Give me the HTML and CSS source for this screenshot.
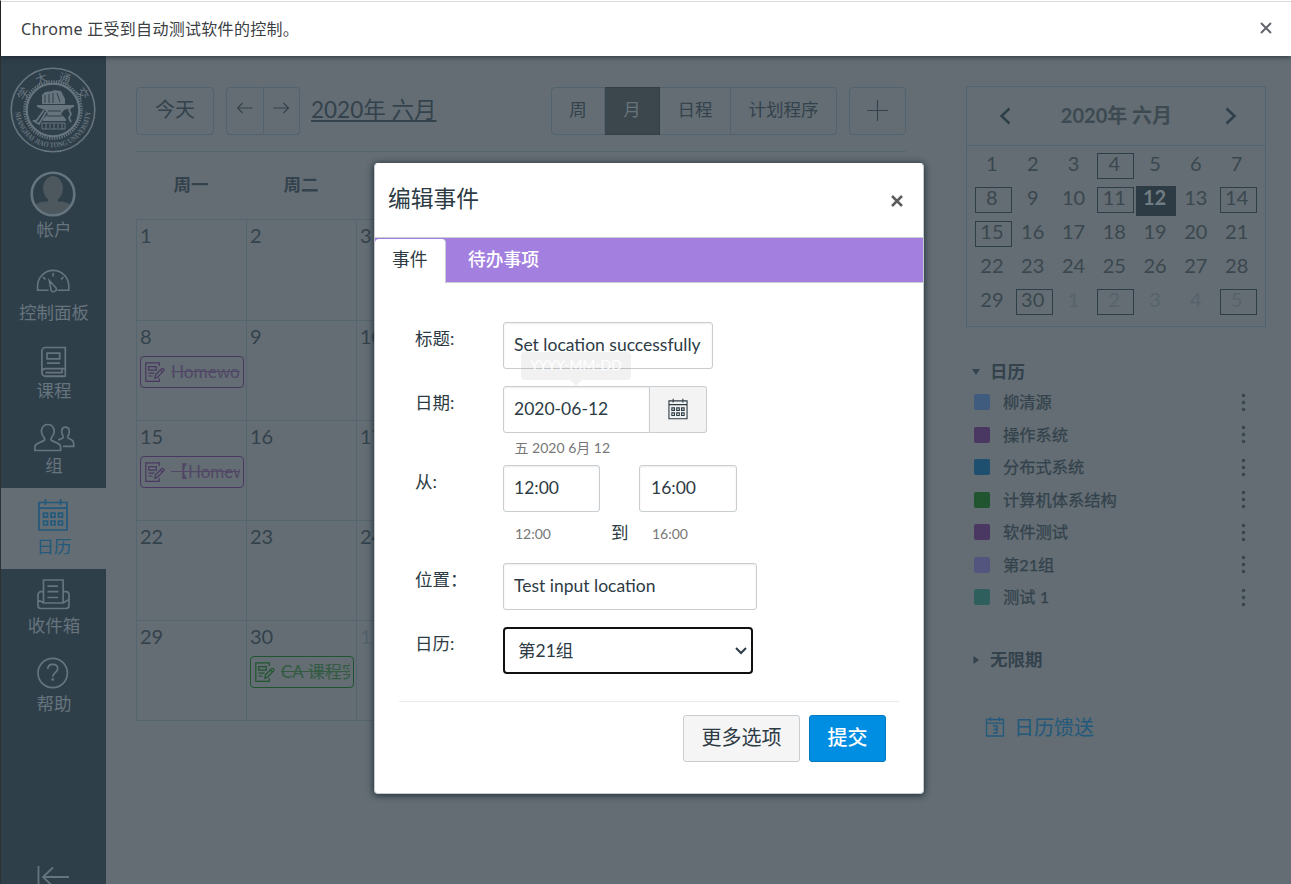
FILE: index.html
```html
<!DOCTYPE html>
<html lang="zh-CN">
<head>
<meta charset="utf-8">
<title>日历</title>
<link rel="stylesheet" href="styles.css">
</head>
<body>
<svg class="defs" width="0" height="0">
  <symbol id="assignment" viewBox="0 0 20 20">
    <path d="M14.3 4V.8H.8v18.5h13.5v-3M3.7 4.6h7.6v3.6H3.7zM3.5 11.1h6M3.5 14h4M9.8 16.2l.8-3.4 6-6.2c1.1-1 3.2.9 2.2 2.1l-6 6.3zM15.4 7.9l2.2 2.1" fill="none" stroke="currentColor" stroke-width="1.2"/>
  </symbol>
  <symbol id="calendar" viewBox="0 0 30 34">
    <path d="M1 4.5h28V32H1zM1 10.2h28M7.5 1v6M22.5 1v6" fill="none" stroke="currentColor" stroke-width="1.7"/>
    <path d="M5.5 15.2h4v4h-4zM13 15.2h4v4h-4zM20.500 15.2h4v4h-4zM5.500 23h4v4h-4zM13 23h4v4h-4zM20.500 23h4v4h-4z" fill="none" stroke="currentColor" stroke-width="1.7"/>
  </symbol>
</svg>

<div class="infobar">
  <span class="infobar-text">Chrome 正受到自动测试软件的控制。</span>
  <svg class="infobar-close" width="12" height="12" viewBox="0 0 12 12"><path d="M1 1l10 10M11 1L1 11" stroke="#5f6368" stroke-width="1.9"/></svg>
</div>

<div class="app">
  <nav class="nav">
    <div class="nav-logo">
      <svg width="88" height="88" viewBox="0 0 88 88">
        <defs><path id="arc" d="M6.500 44a37.500 37.500 0 0 0 75 0"/></defs>
        <circle cx="44" cy="44" r="41.800" fill="none" stroke="#66747d" stroke-width="1.6"/>
        <circle cx="44" cy="44" r="28.500" fill="none" stroke="#66747d" stroke-width="2.600" stroke-dasharray="1.3 1.190"/>
        <circle cx="44" cy="44" r="26.300" fill="none" stroke="#66747d" stroke-width="2.2"/>
        <text class="seal-latin"><textPath href="#arc" startOffset="2" textLength="114" lengthAdjust="spacingAndGlyphs">SHANGHAI JIAO TONG UNIVERSITY</textPath></text>
        <g class="seal-han">
          <text transform="translate(13.500 27) rotate(-58)">学</text>
          <text transform="translate(32 11.500) rotate(-20)">大</text>
          <text transform="translate(56 11.500) rotate(20)">通</text>
          <text transform="translate(74.500 27) rotate(58)">交</text>
        </g>
        <path d="M33 29l3-3 8-1 1-1 7 1 4 8v5H33z" fill="#66747d"/>
        <path d="M36 29v8M40 28v9M44 27v10M48 27l3 9" stroke="#2f3f4a" stroke-width="1"/>
        <path d="M28 39h37v2l-10 3-3 4 5 5v2H34v-2l5-5-3-4-8-3z" fill="#66747d"/>
        <path d="M39 45h13M38 50h15" stroke="#2f3f4a"/>
        <path d="M35 44l-7 10-3 1 5 3 7-12M62 41l-2 3 2 4-2 4 2 4" fill="none" stroke="#66747d" stroke-width="1.700"/>
        <path d="M33 57h23v6H33zM37 57v6M41 58v4M45 57v6M49 58v4M53 57v6" fill="none" stroke="#66747d"/>
      </svg>
    </div>
    <div class="nav-item nav-account">
      <svg width="48" height="48" viewBox="0 0 48 48">
        <clipPath id="face"><circle cx="24" cy="24" r="21"/></clipPath>
        <g clip-path="url(#face)" fill="#4d575e"><ellipse cx="24" cy="18.500" rx="10" ry="12.500"/><path d="M19 28h10v3.500c8 0 12 2 14 5V48H5V36.500c3-4 7-5 14-5z"/></g>
        <circle cx="24" cy="24" r="21.300" fill="none" stroke="#66747d" stroke-width="2.600"/>
      </svg>
      <span>帐户</span>
    </div>
    <div class="nav-item nav-dashboard">
      <svg width="40" height="40" viewBox="0 0 40 40" fill="none" stroke="#66747d" stroke-width="1.600">
        <path d="M15.500 28.300H4.600V24a15.600 15.600 0 0 1 31.200 0v4.300H24.500M20.200 11v3.500M10 15l2.500 2.500M30.500 15L28 17.500M16.300 18.500l6.800 7.500c1.500 3-3.700 5.200-5 2.300z"/>
      </svg>
      <span>控制面板</span>
    </div>
    <div class="nav-item nav-courses">
      <svg width="40" height="40" viewBox="0 0 40 40" fill="none" stroke="#66747d" stroke-width="1.700">
        <path d="M11.500 35h20.800V6.500H12.500a3.600 3.600 0 0 0-3.600 3.600v21.500c0 2 1.400 3.900 3.600 3.900h19.700M8.900 31.500c0-2.400 1.600-3.800 3.900-3.800h19.500M29 28v4M12.500 31.700H29M14 12.200h12.700v5.600H14zM14 22.200h13"/>
      </svg>
      <span>课程</span>
    </div>
    <div class="nav-item nav-groups">
      <svg width="42" height="40" viewBox="0 0 42 40" fill="none" stroke="#66747d" stroke-width="1.700">
        <path d="M2 34.500v-4c0-3 4.500-3.500 9-6 1.200-1 .8-2-.2-3.300-4.500-5.700-2-12.700 4-12.700s8.500 7 4 12.700c-1 1.300-1.400 2.300-.2 3.300 4.500 2.500 9 3 9 6v4z"/>
        <path d="M30 30.400h10.800c0-6-.5-6-5.800-8.400-1-.8-.2-1.800.5-3 2-3.400.6-7.800-3-7.800s-5 4.400-3 7.800c.7 1.200 1.500 2.200.5 3-2 1-3.600 1.300-4.700 2"/>
      </svg>
      <span>组</span>
    </div>
    <div class="nav-item nav-calendar">
      <svg width="30" height="34"><use href="#calendar"/></svg>
      <span>日历</span>
    </div>
    <div class="nav-item nav-inbox">
      <svg width="40" height="40" viewBox="0 0 40 40" fill="none" stroke="#66747d" stroke-width="1.700">
        <path d="M10.500 27.500V5h19.600v22.500M14.500 11.200H25M14.500 16.700h11M14.500 22.500H25M10.500 16.700H8a3 3 0 0 0-3 3v10.800a3 3 0 0 0 3 3h25a3 3 0 0 0 3-3V19.700a3 3 0 0 0-3-3h-3M5 24.500l5.500 3.500h19.600l5.900-3.500"/>
      </svg>
      <span>收件箱</span>
    </div>
    <div class="nav-item nav-help">
      <svg width="40" height="40" viewBox="0 0 40 40" fill="none" stroke="#66747d" stroke-width="1.700">
        <circle cx="19.700" cy="20" r="14.700"/><path d="M14.700 16c.2-3 2-4.600 5-4.600s5 1.800 5 4.300c0 3.800-5 4-5 8"/><circle cx="19.700" cy="26.500" r="1" fill="#66747d" stroke-width="1"/>
      </svg>
      <span>帮助</span>
    </div>
    <div class="nav-collapse">
      <svg width="33" height="22" viewBox="0 0 33 22" fill="none" stroke="#66747d" stroke-width="1.800"><path d="M1.500 0v22M32 11H6M16 1.500L6 11l10 9.500"/></svg>
    </div>
  </nav>

  <main class="main">
    <section class="calendar">
      <header class="toolbar">
        <div class="btn btn-today">今天</div>
        <div class="btn-group arrows">
          <div class="btn"><svg width="17" height="12" viewBox="0 0 17 12"><path d="M15.500 6H.500M5.500 1L.500 6l5 5" fill="none" stroke="currentColor" stroke-width="1.100"/></svg></div>
          <div class="btn"><svg width="17" height="12" viewBox="0 0 17 12"><path d="M.5 6h15M10.500 1l5 5-5 5" fill="none" stroke="currentColor" stroke-width="1.100"/></svg></div>
        </div>
        <div class="month-title">2020年 六月</div>
        <div class="btn-group views">
          <div class="btn v-week">周</div><div class="btn v-month active">月</div><div class="btn v-agenda">日程</div><div class="btn v-plan">计划程序</div>
        </div>
        <div class="btn btn-add"><svg width="21" height="21" viewBox="0 0 21 21"><path d="M0 10.500h21M10.500 0v21" stroke="currentColor" stroke-width="1.100"/></svg></div>
      </header>
      <div class="weekdays"><span>周一</span><span>周二</span></div>
      <div class="weeks">
        <div class="day">1</div><div class="day">2</div><div class="day">3</div><div class="day-rest"></div>
        <div class="day">8<div class="event purple"><svg width="20" height="20"><use href="#assignment"/></svg><span class="latin">Homewo</span></div></div><div class="day">9</div><div class="day">10</div><div class="day-rest"></div>
        <div class="day">15<div class="event purple"><svg width="20" height="20"><use href="#assignment"/></svg><span>【Homew</span></div></div><div class="day">16</div><div class="day">17</div><div class="day-rest"></div>
        <div class="day">22</div><div class="day">23</div><div class="day">24</div><div class="day-rest"></div>
        <div class="day">29</div><div class="day">30<div class="event green"><svg width="20" height="20"><use href="#assignment"/></svg><span>CA 课程实</span></div></div><div class="day other">1</div><div class="day-rest"></div>
      </div>
    </section>

    <aside class="side">
      <div class="mini">
        <div class="mini-head">
          <svg width="12" height="18" viewBox="0 0 12 18"><path d="M10.500 1.500L2.500 9l8 7.500" fill="none" stroke="#2f3f4a" stroke-width="2.500"/></svg>
          <span>2020年 六月</span>
          <svg width="12" height="18" viewBox="0 0 12 18"><path d="M1.500 1.500l8 7.500-8 7.500" fill="none" stroke="#2f3f4a" stroke-width="2.500"/></svg>
        </div>
        <div class="mini-grid">
          <i>1</i><i>2</i><i>3</i><i class="has">4</i><i>5</i><i>6</i><i>7</i>
          <i class="has">8</i><i>9</i><i>10</i><i class="has">11</i><i class="today">12</i><i>13</i><i class="has">14</i>
          <i class="has">15</i><i>16</i><i>17</i><i>18</i><i>19</i><i>20</i><i>21</i>
          <i>22</i><i>23</i><i>24</i><i>25</i><i>26</i><i>27</i><i>28</i>
          <i>29</i><i class="has">30</i><i class="other">1</i><i class="has other">2</i><i class="other">3</i><i class="other">4</i><i class="has other">5</i>
        </div>
      </div>
      <h2 class="side-title"><svg width="8" height="6" viewBox="0 0 8 6"><path d="M0 0h8L4 6z" fill="currentColor"/></svg>日历</h2>
      <ul class="contexts">
        <li><b class="swatch c1"></b><span>柳清源</span><b class="dots"></b></li>
        <li><b class="swatch c2"></b><span>操作系统</span><b class="dots"></b></li>
        <li><b class="swatch c3"></b><span>分布式系统</span><b class="dots"></b></li>
        <li><b class="swatch c4"></b><span>计算机体系结构</span><b class="dots"></b></li>
        <li><b class="swatch c2"></b><span>软件测试</span><b class="dots"></b></li>
        <li><b class="swatch c5"></b><span>第21组</span><b class="dots"></b></li>
        <li><b class="swatch c6"></b><span>测试 1</span><b class="dots"></b></li>
      </ul>
      <h2 class="side-title undated"><svg width="8" height="8" viewBox="0 0 8 8"><path d="M1.500 0v8L7 4z" fill="currentColor"/></svg>无限期</h2>
      <div class="feed">
        <svg width="20" height="21" viewBox="0 0 20 21"><path d="M1.500 3.500h17V20h-17zM1.500 7.200h17M5.500 1v4M14.500 1v4" fill="none" stroke="currentColor" stroke-width="1.300"/><path d="M8 10h4v7H8M8.500 13.500H12" fill="none" stroke="currentColor" stroke-width="1.300"/></svg>
        <span>日历馈送</span>
      </div>
    </aside>
  </main>
</div>

<div class="modal">
  <header class="modal-head">
    <span>编辑事件</span>
    <svg width="12" height="12" viewBox="0 0 12 12"><path d="M1 1l10 10M11 1L1 11" stroke="#5c5c5c" stroke-width="2.500"/></svg>
  </header>
  <div class="tabs"><div class="tab selected">事件</div><div class="tab">待办事项</div></div>
  <div class="form">
    <label>标题:</label>
    <div class="row-title"><div class="input w-title">Set location successfully</div></div>
    <label>日期:</label>
    <div class="row-date">
      <div class="date-group">
        <div class="input">2020-06-12</div>
        <div class="date-btn"><svg width="20" height="22"><use href="#calendar"/></svg></div>
        <div class="tooltip">YYYY-MM-DD</div>
      </div>
      <div class="hint">五 2020 6月 12</div>
    </div>
    <label>从:</label>
    <div class="row-time">
      <div><div class="input w-from">12:00</div><div class="hint">12:00</div></div>
      <span class="to">到</span>
      <div><div class="input w-to">16:00</div><div class="hint">16:00</div></div>
    </div>
    <label>位置：</label>
    <div class="row-loc"><div class="input w-loc">Test input location</div></div>
    <label>日历:</label>
    <div class="row-cal"><div class="select"><span>第21组</span><svg width="12" height="8" viewBox="0 0 12 8"><path d="M1 1l5 5 5-5" fill="none" stroke="#2d3b45" stroke-width="2"/></svg></div></div>
  </div>
  <footer class="actions"><div class="action more">更多选项</div><div class="action submit">提交</div></footer>
</div>
</body>
</html>
```

FILE: styles.css
```css
* { box-sizing: border-box; }
body {
  margin: 0;
  width: 1291px;
  height: 884px;
  overflow: hidden;
  position: relative;
  background: #636d73;
  color: #33424c;
  font: 17.5px/22px Lato, "Noto Sans CJK SC", sans-serif;
}
svg { display: block; flex: none; }
.defs { position: absolute; }

.infobar {
  height: 56px;
  padding: 0 19px 0 20px;
  display: flex;
  align-items: center;
  justify-content: space-between;
  background: #fff;
  border-top: 1px solid #fff;
  border-left: 1px solid #222;
  box-shadow: inset 0 1px #d9dcde, 0 1px 5px rgba(20, 30, 38, .7);
  position: relative;
  font: 16px/22px "Noto Sans", "Noto Sans CJK SC", sans-serif;
  color: #3c4043;
}
.infobar-text { letter-spacing: .3px; }
.infobar-close { margin-top: -1px; }

.app { display: flex; height: 828px; border-left: 1px solid #2c3135; }
.nav { width: 105px; background: #2f3f4a; color: #66747d; display: flex; flex-direction: column; overflow: hidden; }
.nav > * { flex: none; }
.nav-logo { height: 108px; padding: 10px 0 0 8px; }
.seal-latin { font: 700 7.5px "Liberation Serif", serif; fill: #66747d; }
.seal-han text { font: 12px "Noto Sans CJK SC", sans-serif; fill: #66747d; text-anchor: middle; dominant-baseline: central; }
.nav-item { display: flex; flex-direction: column; align-items: center; justify-content: flex-end; padding: 0 1px 11px 0; }
.nav-item span { height: 22px; margin-left: 2px; white-space: nowrap; }
.nav-account { height: 88px; }
.nav-account svg { margin-bottom: 1px; }
.nav-dashboard { height: 83px; }
.nav-courses { height: 78px; }
.nav-courses svg { margin-bottom: -1px; }
.nav-groups { height: 75px; }
.nav-groups svg { margin: 0 0 -1px 2px; }
.nav-calendar { height: 81px; background: #636d73; color: #22597c; }
.nav-calendar svg { margin-bottom: 4px; }
.nav-inbox { height: 78px; padding-bottom: 10px; }
.nav-help { height: 79px; }
.nav-collapse { margin-top: 140px; padding-left: 36px; }

.main { display: flex; gap: 60px; padding: 30px 0 0 30px; }
.calendar { width: 770px; }
.toolbar { display: flex; align-items: center; height: 66px; padding: 1px 0 17px; border-bottom: 1px solid #556570; }
.btn { height: 48px; border: 1px solid #52626e; border-radius: 4px; display: flex; align-items: center; justify-content: center; padding-bottom: 3px; }
.btn-today { width: 78px; font-size: 20px; padding-bottom: 4px; }
.btn-group { display: flex; }
.btn-group .btn { border-radius: 0; }
.btn-group .btn + .btn { border-left: 0; }
.btn-group .btn:first-child { border-radius: 4px 0 0 4px; }
.btn-group .btn:last-child { border-radius: 0 4px 4px 0; }
.arrows { margin: 0 11px 0 12px; }
.arrows .btn { width: 38px; padding-bottom: 6px; }
.arrows .btn + .btn { width: 36px; }
.month-title { margin-bottom: 2px; font-size: 22.500px; line-height: 26px; text-decoration: underline; text-decoration-thickness: 1.500px; text-underline-offset: 2px; white-space: nowrap; }
.views { margin-left: auto; }
.views .btn { padding-bottom: 1px; }
.v-week { width: 54px; }
.v-month { width: 55px; }
.v-agenda { width: 71px; }
.v-plan { width: 106px; }
.btn.active { background: #3b464d; border-color: #333f47; color: #66737a; }
.btn-add { width: 57px; margin-left: 12px; padding: 0; }
.weekdays { display: flex; height: 67px; align-items: center; font-weight: 700; padding-bottom: 2px; }
.weekdays span { width: 110px; text-align: center; }
.weeks { display: grid; grid-template-columns: 110px 110px 110px 1fr; grid-template-rows: 101px 100px 100px 100px 100px; border-left: 1px solid #556570; border-bottom: 1px solid #556570; }
.day { border-top: 1px solid #556570; border-right: 1px solid #556570; padding: 3px 2px 0 3px; font-size: 20px; line-height: 24px; overflow: hidden; }
.day.other { color: #53616c; }
.day-rest { border-top: 1px solid #556570; }
.event { margin-top: 8px; height: 32px; width: 104px; border: 1px solid; border-radius: 4px; display: flex; align-items: center; padding-left: 4px; font-size: 17px; line-height: 27px; }
.event span { width: 69px; margin-left: 6px; overflow: hidden; white-space: nowrap; text-decoration: line-through; opacity: .7; height: 28px; }
.event .latin { font-size: 17.2px; }
.purple { color: #4a3862; }
.green { color: #20552f; }

.side { width: 300px; }
.mini { height: 241px; border: 1px solid #52626e; }
.mini-head { height: 59px; border-bottom: 1px solid #52626e; padding: 0 28px 1px 32px; display: flex; align-items: center; justify-content: space-between; font-size: 20px; font-weight: 700; color: #3d4a52; }
.mini-head span { margin: -1px 3px 0 0; }
.mini-grid { display: grid; grid-template-columns: repeat(7, 40.800px); grid-auto-rows: 34px; padding: 7px 0 0 6px; justify-items: center; font-size: 20px; color: #3b474f; }
.mini-grid i { font-style: normal; width: 37px; height: 26px; line-height: 18px; text-align: center; border: 1px solid transparent; padding-right: 3px; }
.mini-grid .has { border-color: #2f3f4a; }
.mini-grid .today { background: #2d3b45; color: #707b82; font-weight: 700; width: 40px; height: 30px; margin: -1px 1px 0 0; line-height: 20px; }
.mini-grid .other { color: #57636b; }
.side-title { margin: 34px 0 0; padding-left: 6px; display: flex; align-items: center; gap: 10px; font-size: 17.500px; line-height: 22px; }
.contexts { list-style: none; margin: 3px 0 0; padding: 0; font-size: 16.250px; }
.contexts li { height: 32.500px; display: flex; align-items: center; padding: 0 19px 0 8px; }
.contexts span { flex: 1; margin-left: 13px; -webkit-text-stroke: .25px; }
.swatch { width: 16px; height: 16px; border-radius: 2px; }
.c1 { background: #3f5b7d; }
.c2 { background: #4a3862; }
.c3 { background: #1f4f6e; }
.c4 { background: #20552f; }
.c5 { background: #53557f; }
.c6 { background: #2f5f5c; }
.dots { width: 7px; height: 21px; background: radial-gradient(circle, #3b4952 1.600px, transparent 2.200px) 0 0 / 7px 7px; }
.undated { margin-top: 35px; }
.feed { display: flex; gap: 9px; align-items: center; margin-top: 45px; padding-left: 19px; font-size: 20px; color: #22597c; }

.modal { position: absolute; left: 374px; top: 163px; width: 550px; height: 631px; background: #fff; border: 1px solid #c4cacd; border-top-color: #fff; border-radius: 4px; box-shadow: 0 1px 6px 1px rgba(20, 35, 45, .75); color: #2d3b45; }
.modal-head { height: 73px; padding: 1px 20px 0 13px; display: flex; align-items: center; justify-content: space-between; font-size: 22.750px; line-height: 28px; }
.modal-head span { margin-top: -5px; }
.tabs { height: 46px; display: flex; border-top: 1px solid #c7cdd1; border-bottom: 1px solid #c7cdd1; background: #a37fdf; padding-top: 1px; }
.tab { height: 44px; padding: 9px 22px 0; color: #fff; font-weight: 500; font-size: 17.8px; }
.tab.selected { width: 71px; padding: 9px 0 0 17px; background: #fff; color: #2d3b45; border-radius: 4px 4px 0 0; border-right: 1px solid #c7cdd1; font-weight: 400; }
.form { display: grid; grid-template-columns: 88px 1fr; grid-template-rows: 64px 79px 98px 64px 47px; padding: 39px 0 0 40px; }
.form label { padding-top: 6px; }
.input { height: 47px; border: 1px solid #c7cdd1; border-radius: 3px; padding: 0 10px 1px; display: flex; align-items: center; box-shadow: inset 0 1px 2px rgba(0, 0, 0, .08); white-space: nowrap; }
.w-title { width: 210px; }
.w-from { width: 97px; }
.w-to { width: 98px; padding-left: 11px; }
.w-loc { width: 254px; }
.date-group { display: flex; width: 204px; position: relative; }
.date-group .input { width: 147px; border-radius: 3px 0 0 3px; }
.date-btn { width: 57px; height: 47px; background: #f3f3f3; border: 1px solid #c7cdd1; border-left: 0; border-radius: 0 3px 3px 0; display: flex; align-items: center; justify-content: center; padding-bottom: 2px; }
.tooltip { position: absolute; left: 18px; top: -34px; width: 110px; height: 28px; border-radius: 4px; background: rgba(0, 0, 0, .055); color: #fff; font-size: 14px; line-height: 26px; text-align: center; }
.tooltip::after { content: ""; position: absolute; left: 49px; top: 28px; border: 6px solid transparent; border-bottom: 0; border-top-color: #f1f1f1; }
.hint { font-size: 14px; line-height: 18px; color: #777; padding-left: 12px; margin-top: 6px; }
.row-date .hint { padding-left: 11.5px; }
.row-time { display: flex; }
.row-time .hint { margin-top: 13px; }
.row-time .w-to + .hint { padding-left: 13px; }
.to { width: 39px; padding: 57px 0 0 11px; }
.select { width: 250px; height: 47px; border: 2px solid #101010; border-radius: 4px; display: flex; align-items: center; justify-content: space-between; padding: 0 4px 0 13px; }
.select span { padding-top: 1px; }
.actions { margin: 27px 24px 0 24px; border-top: 1px solid #e8eaec; padding: 13px 13px 0 0; display: flex; justify-content: flex-end; gap: 9px; font-size: 20px; }
.action { height: 47px; border: 1px solid #c7cdd1; border-radius: 3px; background: #f5f5f5; display: flex; align-items: center; justify-content: center; padding-bottom: 3px; }
.more { width: 117px; }
.submit { width: 77px; background: #008ee2; border-color: #0079c1; color: #fff; font-weight: 500; }
```
